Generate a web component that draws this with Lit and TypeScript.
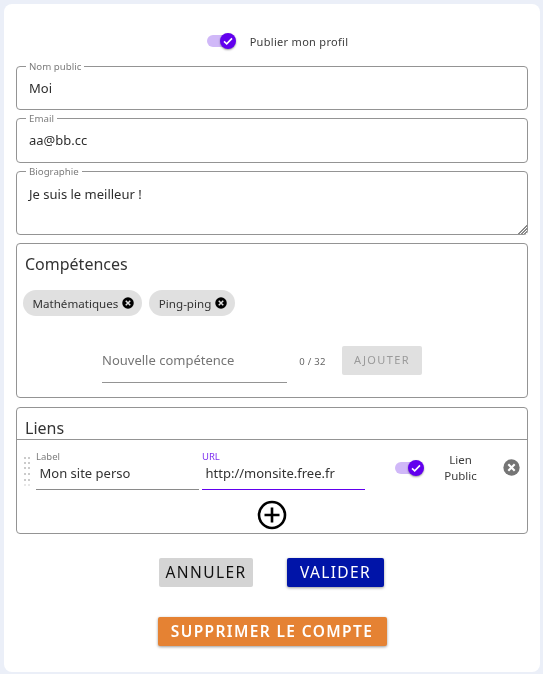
import { css, html, LitElement, svg } from "lit";
import { customElement, property } from "lit/decorators.js";

const crossIcon = (fill: string, cross: string) => html`
  <svg viewBox="0 0 24 24" width="100%" height="100%">
    <circle cx="12" cy="12" r="11.5" fill=${fill}></circle>
    <path d="M7.5 7.5l9 9M16.5 7.5l-9 9" stroke=${cross} stroke-width="3" fill="none"></path>
  </svg>
`;

const GRIP_ROWS = [1, 6, 11, 17, 23, 28];

@customElement("check-toggle")
export class CheckToggle extends LitElement {
  static override styles = css`
    :host {
      display: block;
      position: relative;
      width: 29px;
      height: 16px;
      flex: none;
    }

    .track {
      position: absolute;
      left: 0;
      top: 2px;
      width: 26px;
      height: 12px;
      border-radius: 6px;
      background: #d0b8f8;
    }

    .thumb {
      position: absolute;
      right: 0;
      top: 0;
      width: 16px;
      height: 16px;
      border-radius: 50%;
      background: #6200ee;
      box-shadow: 0 1px 2px rgba(0, 0, 0, 0.4);
    }

    svg {
      display: block;
      width: 16px;
      height: 16px;
    }
  `;

  override render() {
    return html`
      <div class="track"></div>
      <div class="thumb">
        <svg viewBox="0 0 16 16"><path d="M4 8.4l2.7 2.5L12 5.4" stroke="#fff" stroke-width="1.6" fill="none"></path></svg>
      </div>
    `;
  }
}

@customElement("outlined-field")
export class OutlinedField extends LitElement {
  static override styles = css`
    :host {
      display: block;
    }

    fieldset {
      display: block;
      margin: -4.5px 0 0;
      padding: 0;
      height: 48.5px;
      box-sizing: border-box;
      border: 1px solid #949494;
      border-radius: 4px;
      min-width: 0;
    }

    legend {
      margin-left: 9px;
      padding: 0 3px;
      font-size: 9.7px;
      line-height: 9px;
      height: 9px;
      color: #7c7c7c;
    }

    input,
    textarea {
      display: block;
      box-sizing: border-box;
      width: 100%;
      border: 0;
      outline: 0;
      margin: 0;
      background: transparent;
      padding: 0 12px;
      font: 13px/20px "Noto Sans", sans-serif;
      color: #2e2e2e;
    }

    input {
      height: 26px;
      margin-top: 4px;
    }

    .area fieldset {
      height: 68.5px;
    }

    textarea {
      height: 58px;
      padding-top: 8px;
      resize: vertical;
    }

    textarea::-webkit-resizer {
      background:
        linear-gradient(135deg, #fff 66%, transparent 66%),
        repeating-linear-gradient(135deg, #8a8a8a 0 1px, #fff 1px 2.1px);
    }
  `;

  @property({ type: String })
  label = "";

  @property({ type: String })
  value = "";

  @property({ type: Boolean })
  multiline = false;

  override render() {
    return html`
      <div class=${this.multiline ? "area" : ""}>
        <fieldset>
          <legend>${this.label}</legend>
          ${this.multiline
            ? html`<textarea .value=${this.value}></textarea>`
            : html`<input type="text" .value=${this.value} />`}
        </fieldset>
      </div>
    `;
  }
}

@customElement("app-root")
export class AppRoot extends LitElement {
  static override styles = css`
    :host {
      display: block;
      height: 674px;
      box-sizing: border-box;
      padding: 4px 3px 2px 4px;
      background: #ebeff8;
      font-family: "Noto Sans", sans-serif;
      color: #333;
    }

    .card {
      height: 100%;
      box-sizing: border-box;
      padding: 27px 12px 0;
      background: #fff;
      border-radius: 8px;
      display: flex;
      flex-direction: column;
      will-change: transform;
    }

    .publish {
      display: flex;
      justify-content: center;
      align-items: center;
      gap: 14px;
      height: 20px;
      margin: 0 0 15px;
      padding-left: 11px;
      font-size: 11px;
      letter-spacing: 0.3px;
      color: #3c3c3c;
    }

    .fields {
      display: flex;
      flex-direction: column;
      gap: 8.5px;
    }

    .box {
      border: 1px solid #949494;
      border-radius: 4px;
      box-sizing: border-box;
    }

    .skills {
      height: 155px;
      margin-top: -0.4px;
      padding: 9px 6px 0;
    }

    h2 {
      margin: 0;
      font-size: 16px;
      line-height: 22px;
      font-weight: 400;
      color: #333;
      padding-left: 2px;
    }

    .chips {
      display: flex;
      gap: 7px;
      margin-top: 15px;
    }

    .chip {
      display: flex;
      align-items: center;
      gap: 4px;
      height: 26px;
      padding: 0 8px 0 9.5px;
      border-radius: 13px;
      background: #e0e0e0;
      font-size: 11.6px;
      color: #333;
    }

    .chip span {
      display: block;
      width: 12px;
      height: 12px;
    }

    .add {
      display: flex;
      align-items: flex-start;
      margin: 29px 0 0 79px;
    }

    .new {
      width: 185px;
      height: 38px;
      box-sizing: border-box;
      border-bottom: 1px solid #949494;
      font-size: 13px;
      line-height: 30px;
      color: #757575;
    }

    .count {
      width: 51px;
      padding-right: 4px;
      text-align: center;
      font-size: 9.5px;
      letter-spacing: 0.3px;
      line-height: 34px;
      color: #666;
    }

    .add-btn {
      width: 80px;
      height: 29px;
      margin-top: 1px;
      background: #e0e0e0;
      border-radius: 2px;
      text-align: center;
      font-size: 11px;
      line-height: 28px;
      letter-spacing: 1.4px;
      color: #9a9a9a;
    }

    .links {
      height: 127px;
    }

    .links h2 {
      height: 32px;
      box-sizing: border-box;
      padding: 9px 0 0 8px;
      border-bottom: 1px solid #949494;
    }

    .link-row {
      display: flex;
      align-items: flex-start;
      height: 57px;
      margin-top: 9px;
    }

    .grip {
      display: block;
      width: 6px;
      height: 30px;
      margin: 8px 6px 0 7px;
      flex: none;
    }

    .line {
      width: 163px;
      height: 41px;
      box-sizing: border-box;
      border-bottom: 1px solid #8a8a8a;
      margin-right: 3px;
      font-size: 13px;
      color: #333;
    }

    .line small {
      display: block;
      padding-top: 2px;
      font-size: 9.5px;
      line-height: 11px;
      color: #7c7c7c;
    }

    .line div {
      line-height: 22px;
      padding-left: 3.5px;
    }

    .line.focused {
      border-bottom-color: #6200ee;
    }

    .line.focused small {
      color: #7e2ff0;
    }

    .row-toggle {
      margin: 11px 0 0 27px;
    }

    .public {
      width: 70px;
      margin: 3px 0 0 1.5px;
      text-align: center;
      font-size: 11.5px;
      line-height: 16px;
      color: #3c3c3c;
    }

    .remove {
      width: 17px;
      height: 17px;
      margin: 10px 0 0 7px;
    }

    .plus {
      display: block;
      width: 30px;
      height: 30px;
      margin: -6px auto 0;
    }

    .actions {
      display: flex;
      justify-content: center;
      gap: 34px;
      margin-top: 24px;
      padding-right: 1px;
    }

    .btn {
      display: block;
      height: 29px;
      box-sizing: border-box;
      border-radius: 2px;
      text-align: center;
      font-size: 15.5px;
      line-height: 28px;
      letter-spacing: 1.38px;
    }

    .cancel {
      width: 94px;
      background: #d4d4d4;
      color: #111;
    }

    .validate {
      width: 97px;
      background: #0014a8;
      color: #fff;
      box-shadow: 0 1px 3px rgba(0, 0, 0, 0.4);
    }

    .delete {
      align-self: center;
      width: 229px;
      margin-top: 30px;
      background: #e58233;
      color: #fff;
      font-weight: 600;
      box-shadow: 0 1px 3px rgba(0, 0, 0, 0.4);
    }
  `;

  override render() {
    return html`
      <div class="card">
        <div class="publish">
          <check-toggle></check-toggle>
          <span>Publier mon profil</span>
        </div>
        <div class="fields">
          <outlined-field label="Nom public" value="Moi"></outlined-field>
          <outlined-field label="Email" value="aa@bb.cc"></outlined-field>
          <outlined-field label="Biographie" value="Je suis le meilleur !" multiline></outlined-field>

          <section class="box skills">
            <h2>Compétences</h2>
            <div class="chips">
              <div class="chip">Mathématiques <span>${crossIcon("#000", "#e0e0e0")}</span></div>
              <div class="chip">Ping-ping <span>${crossIcon("#000", "#e0e0e0")}</span></div>
            </div>
            <div class="add">
              <div class="new">Nouvelle compétence</div>
              <div class="count">0 / 32</div>
              <div class="add-btn">AJOUTER</div>
            </div>
          </section>

          <section class="box links">
            <h2>Liens</h2>
            <div class="link-row">
              <svg class="grip" viewBox="0 0 6 30">
                ${GRIP_ROWS.map(
                  (y, i) => svg`
                    <circle cx="1" cy=${y} r="0.8" fill=${i === 5 ? "#c8c8c8" : "#8a8a8a"}></circle>
                    <circle cx="5" cy=${y} r="0.8" fill=${i === 5 ? "#c8c8c8" : "#8a8a8a"}></circle>
                  `,
                )}
              </svg>
              <div class="line"><small>Label</small><div>Mon site perso</div></div>
              <div class="line focused"><small>URL</small><div>http://monsite.free.fr</div></div>
              <check-toggle class="row-toggle"></check-toggle>
              <div class="public">Lien<br />Public</div>
              <div class="remove">${crossIcon("#757575", "#fff")}</div>
            </div>
            <svg class="plus" viewBox="0 0 30 30">
              <circle cx="15" cy="15" r="13" stroke="#000" stroke-width="2.6" fill="none"></circle>
              <path d="M15 7.5v15M7.5 15h15" stroke="#000" stroke-width="2.6" fill="none"></path>
            </svg>
          </section>
        </div>

        <div class="actions">
          <div class="btn cancel">ANNULER</div>
          <div class="btn validate">VALIDER</div>
        </div>
        <div class="btn delete">SUPPRIMER LE COMPTE</div>
      </div>
    `;
  }
}
